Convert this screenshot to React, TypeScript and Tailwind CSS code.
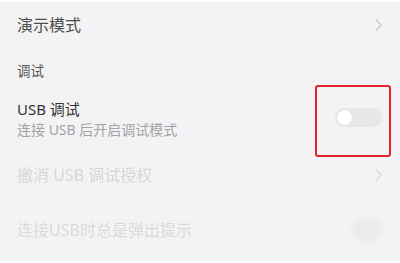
const font = { fontFamily: '"Noto Sans", "Noto Sans CJK SC", sans-serif' };

function Chevron({ color }: { color: string }) {
  return (
    <svg width="9" height="14" viewBox="0 0 9 14" fill="none" className="shrink-0">
      <path d="M2 1.5 L7 7 L2 12.5" stroke={color} strokeWidth="1.4" strokeLinecap="round" strokeLinejoin="round" />
    </svg>
  );
}

export default function App() {
  return (
    <div
      style={font}
      className="relative flex h-[263px] w-[400px] flex-col overflow-hidden border-y-2 border-white bg-[#f3f3f5]"
    >
      <div className="flex h-[46px] shrink-0 items-center justify-between pl-[17px] pr-[17px]">
        <span className="text-[16px] leading-none text-[#4d4d4d]">演示模式</span>
        <Chevron color="#c9c9cb" />
      </div>

      <div className="flex h-[48px] shrink-0 items-center pl-[17px]">
        <span className="text-[13.5px] leading-none text-[#555]">调试</span>
      </div>

      <div className="flex h-[56px] shrink-0 items-center justify-between pl-[17px] pr-[18px]">
        <div className="flex flex-col pb-[10px]">
          <span className="text-[15px] leading-[21px] text-[#333]">USB 调试</span>
          <span className="text-[14px] leading-[20px] text-[#a3a3a5]">连接 USB 后开启调试模式</span>
        </div>
        <div className="mb-[13px] flex h-[19px] w-[47px] items-center rounded-full bg-[#e7e7e9] px-[1px]">
          <div className="h-[17px] w-[17px] rounded-full border border-[#e0e0e0] bg-white" />
        </div>
      </div>

      <div className="flex h-[46px] shrink-0 items-center justify-between pl-[17px] pr-[17px]">
        <span className="text-[16px] leading-none text-[#d6d6d8] blur-[0.6px]">撤消 USB 调试授权</span>
        <Chevron color="#dcdcde" />
      </div>

      <div className="flex h-[64px] shrink-0 items-center justify-between pl-[17px] pr-[18px]">
        <span className="text-[16px] leading-none text-[#d9d9db] blur-[0.7px]">连接USB时总是弹出提示</span>
        <div className="h-[22px] w-[30px] rounded-full bg-[#ebebed] blur-[2px]" />
      </div>

      <div className="absolute left-[315px] top-[83px] h-[72px] w-[76px] rounded-[3px] border-[2.5px] border-[#e5232a]" />
    </div>
  );
}
